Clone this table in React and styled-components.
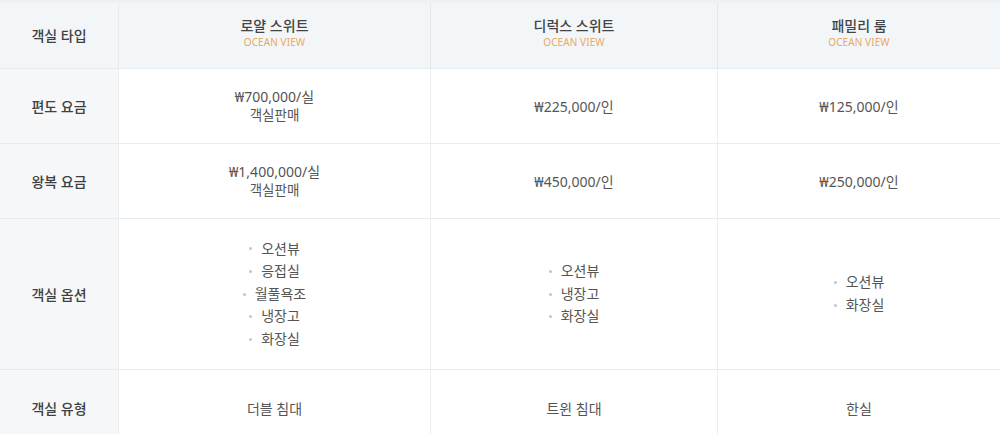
import React from "react";
import styled, { createGlobalStyle } from "styled-components";

const GlobalStyle = createGlobalStyle`
	html, body {
		margin: 0;
		padding: 0;
		background: #ffffff;
		font-family: "Noto Sans", "Noto Sans CJK KR", sans-serif;
	}
`;

const rooms = [
	{
		name: "로얄 스위트",
		oneWay: ["₩700,000/실", "객실판매"],
		roundTrip: ["₩1,400,000/실", "객실판매"],
		options: ["오션뷰", "응접실", "월풀욕조", "냉장고", "화장실"],
		bed: "더블 침대",
	},
	{
		name: "디럭스 스위트",
		oneWay: ["₩225,000/인"],
		roundTrip: ["₩450,000/인"],
		options: ["오션뷰", "냉장고", "화장실"],
		bed: "트윈 침대",
	},
	{
		name: "패밀리 룸",
		oneWay: ["₩125,000/인"],
		roundTrip: ["₩250,000/인"],
		options: ["오션뷰", "화장실"],
		bed: "한실",
	},
];

export default function App() {
	return (
		<>
			<GlobalStyle />
			<Table>
				<Label $head>객실 타입</Label>
				{rooms.map((room) => (
					<HeadCell key={room.name}>
						<h3>{room.name}</h3>
						<span>OCEAN VIEW</span>
					</HeadCell>
				))}

				<Label>편도 요금</Label>
				{rooms.map((room) => (
					<Cell key={room.name}>
						{room.oneWay.map((line) => (
							<Line key={line}>{line}</Line>
						))}
					</Cell>
				))}

				<Label>왕복 요금</Label>
				{rooms.map((room) => (
					<Cell key={room.name}>
						{room.roundTrip.map((line) => (
							<Line key={line}>{line}</Line>
						))}
					</Cell>
				))}

				<Label>객실 옵션</Label>
				{rooms.map((room) => (
					<Cell key={room.name}>
						<Options>
							{room.options.map((opt) => (
								<li key={opt}>{opt}</li>
							))}
						</Options>
					</Cell>
				))}

				<Label>객실 유형</Label>
				{rooms.map((room) => (
					<Cell key={room.name}>{room.bed}</Cell>
				))}
			</Table>
		</>
	);
}

const Table = styled.div`
	display: grid;
	grid-template-columns: 119px 312px 287px 1fr;
	grid-template-rows: 66px 75px 75px 151px 76px;
	width: 1000px;
	border-top: 3px solid #eef1f4;
	box-sizing: border-box;
	color: #555;
	font-size: 14px;
`;

const Label = styled.div`
	display: flex;
	align-items: center;
	justify-content: center;
	color: #404040;
	font-weight: 500;
	border-right: 1px solid #e9ecef;
	border-bottom: 1px solid #e9ecef;
	background-color: ${(p) => (p.$head ? "#f3f6f9" : "#f5f7f9")};
	padding-bottom: ${(p) => (p.$head ? "2px" : "0")};
`;

const HeadCell = styled.div`
	display: flex;
	flex-direction: column;
	align-items: center;
	justify-content: center;
	background-color: #f3f6f9;
	border-right: 1px solid #e6e9ec;
	border-bottom: 1px solid #e9ecef;
	padding-bottom: 6px;
	&:nth-child(4) {
		border-right: none;
	}
	h3 {
		margin: 0;
		font-size: 14px;
		font-weight: 500;
		color: #444;
		line-height: 18px;
	}
	span {
		font-family: "Noto Sans", sans-serif;
		font-size: 10px;
		color: #eaa862;
		line-height: 14px;
		letter-spacing: 0.1px;
	}
`;

const Cell = styled.div`
	display: flex;
	flex-direction: column;
	align-items: center;
	justify-content: center;
	border-right: 1px solid #eceef1;
	border-bottom: 1px solid #e9ecef;
	color: #555;
	&:nth-child(4n) {
		border-right: none;
	}
`;

const Line = styled.div`
	line-height: 19px;
	& + & {
		font-size: 13.5px;
	}
`;

const Options = styled.ul`
	list-style: none;
	margin: 0;
	padding: 0;
	li {
		display: flex;
		align-items: center;
		justify-content: center;
		line-height: 22.6px;
		&::before {
			content: "";
			width: 3px;
			height: 3px;
			border-radius: 50%;
			background-color: #c4c4c4;
			margin-right: 9px;
		}
	}
`;
